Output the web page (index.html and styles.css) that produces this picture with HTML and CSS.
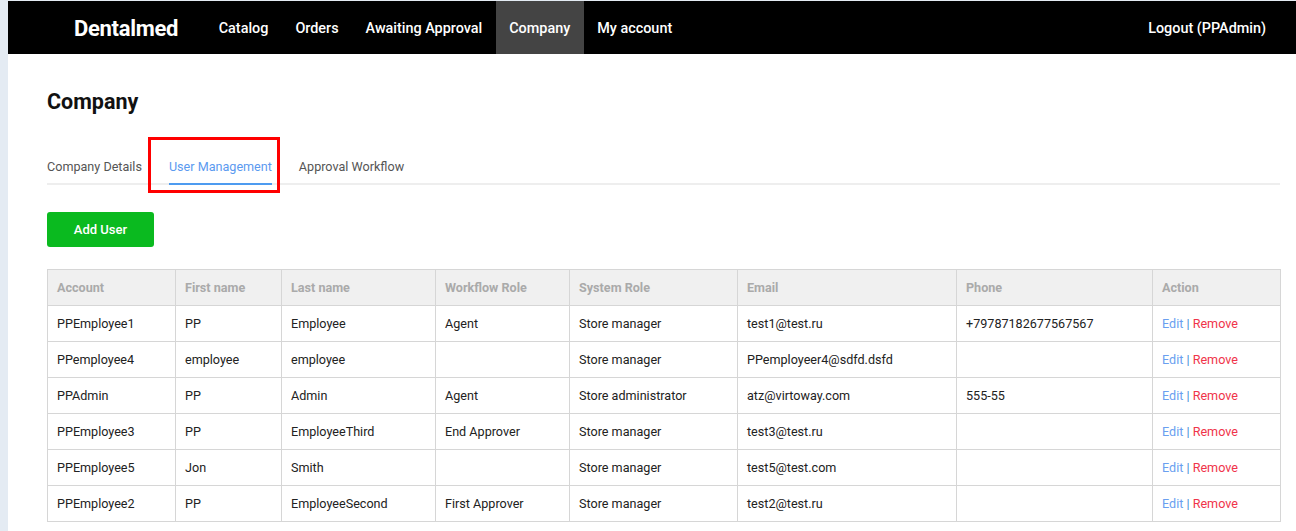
FILE: index.html
```html
<!DOCTYPE html>
<html>
<head>
<meta charset="utf-8">
<link rel="stylesheet" href="styles.css">
</head>
<body>
<div class="page">
  <header class="topbar">
    <div class="brand">Dentalmed</div>
    <nav class="menu">
      <a class="menu-item">Catalog</a>
      <a class="menu-item">Orders</a>
      <a class="menu-item">Awaiting Approval</a>
      <a class="menu-item active">Company</a>
      <a class="menu-item">My account</a>
    </nav>
    <a class="logout">Logout (PPAdmin)</a>
  </header>
  <main class="content">
    <h1 class="title">Company</h1>
    <div class="tabs">
      <a class="tab">Company Details</a>
      <a class="tab active">User Management</a>
      <a class="tab">Approval Workflow</a>
      <div class="highlight"></div>
    </div>
    <button class="btn-add">Add User</button>
    <table class="users">
      <colgroup>
        <col style="width:128px"><col style="width:106px"><col style="width:154px"><col style="width:134px">
        <col style="width:168px"><col style="width:219px"><col style="width:196px"><col style="width:128px">
      </colgroup>
      <thead>
        <tr><th>Account</th><th>First name</th><th>Last name</th><th>Workflow Role</th><th>System Role</th><th>Email</th><th>Phone</th><th>Action</th></tr>
      </thead>
      <tbody>
        <tr><td>PPEmployee1</td><td>PP</td><td>Employee</td><td>Agent</td><td>Store manager</td><td>test1@test.ru</td><td>+79787182677567567</td><td><a class="edit">Edit</a> <span class="sep">|</span> <a class="remove">Remove</a></td></tr>
        <tr><td>PPemployee4</td><td>employee</td><td>employee</td><td></td><td>Store manager</td><td>PPemployeer4@sdfd.dsfd</td><td></td><td><a class="edit">Edit</a> <span class="sep">|</span> <a class="remove">Remove</a></td></tr>
        <tr><td>PPAdmin</td><td>PP</td><td>Admin</td><td>Agent</td><td>Store administrator</td><td>atz@virtoway.com</td><td>555-55</td><td><a class="edit">Edit</a> <span class="sep">|</span> <a class="remove">Remove</a></td></tr>
        <tr><td>PPEmployee3</td><td>PP</td><td>EmployeeThird</td><td>End Approver</td><td>Store manager</td><td>test3@test.ru</td><td></td><td><a class="edit">Edit</a> <span class="sep">|</span> <a class="remove">Remove</a></td></tr>
        <tr><td>PPEmployee5</td><td>Jon</td><td>Smith</td><td></td><td>Store manager</td><td>test5@test.com</td><td></td><td><a class="edit">Edit</a> <span class="sep">|</span> <a class="remove">Remove</a></td></tr>
        <tr><td>PPEmployee2</td><td>PP</td><td>EmployeeSecond</td><td>First Approver</td><td>Store manager</td><td>test2@test.ru</td><td></td><td><a class="edit">Edit</a> <span class="sep">|</span> <a class="remove">Remove</a></td></tr>
      </tbody>
    </table>
  </main>
</div>
</body>
</html>
```

FILE: styles.css
```css
html, body {
  margin: 0;
  padding: 0;
}
body {
  background: #e4ebf3;
  font-family: Roboto, "Liberation Sans", Arial, sans-serif;
  color: #222;
}
.page {
  margin: 1px 0 0 8px;
  background: #fff;
  min-height: 530px;
}
.topbar {
  display: flex;
  align-items: stretch;
  height: 53px;
  background: #000;
  padding: 0 30px 0 66px;
}
.brand {
  display: flex;
  align-items: center;
  padding-top: 1px;
  color: #fff;
  font-size: 22px;
  font-weight: 700;
  letter-spacing: -0.3px;
  margin-right: 27px;
}
.menu {
  display: flex;
  flex: 1;
}
.menu-item {
  display: flex;
  align-items: center;
  padding: 2px 13.5px 0;
  color: #fff;
  font-size: 14.4px;
  font-weight: 500;
}
.menu-item.active {
  background: #444;
}
.logout {
  display: flex;
  align-items: center;
  padding-top: 2px;
  color: #fff;
  font-size: 14.4px;
  font-weight: 500;
}
.content {
  padding: 34px 16px 0 39px;
}
.title {
  margin: 0;
  font-size: 21.5px;
  line-height: 28px;
  font-weight: 700;
  color: #111;
}
.tabs {
  position: relative;
  display: flex;
  gap: 27px;
  margin-top: 30px;
  border-bottom: 2px solid #eee;
}
.tab {
  font-size: 12.6px;
  line-height: 20px;
  padding: 11px 0 6px;
  margin-bottom: -2px;
  border-bottom: 2px solid transparent;
  color: #555;
}
.tab.active {
  color: #5b9af0;
  border-bottom-color: #4d9bf0;
}
.highlight {
  position: absolute;
  left: 101px;
  top: -9px;
  width: 132px;
  height: 56px;
  box-sizing: border-box;
  border: 3px solid #f00;
}
.btn-add {
  display: block;
  margin-top: 27px;
  width: 107px;
  height: 35px;
  border: none;
  border-radius: 3px;
  background: #0aba1f;
  color: #fff;
  font-family: inherit;
  font-size: 13px;
  font-weight: 500;
}
.users {
  margin-top: 22px;
  width: 1233px;
  table-layout: fixed;
  border-collapse: collapse;
  font-size: 12.6px;
}
.users th, .users td {
  border: 1px solid #d6d6d6;
  height: 36px;
  padding: 0 9px;
  text-align: left;
  box-sizing: border-box;
  white-space: nowrap;
}
.users th {
  background: #f0f0f0;
  color: #aaa;
  font-weight: 700;
}
.users td {
  color: #222;
}
.edit { color: #6a9ff0; }
.sep { color: #4d90d8; }
.remove { color: #f0344a; }
```
